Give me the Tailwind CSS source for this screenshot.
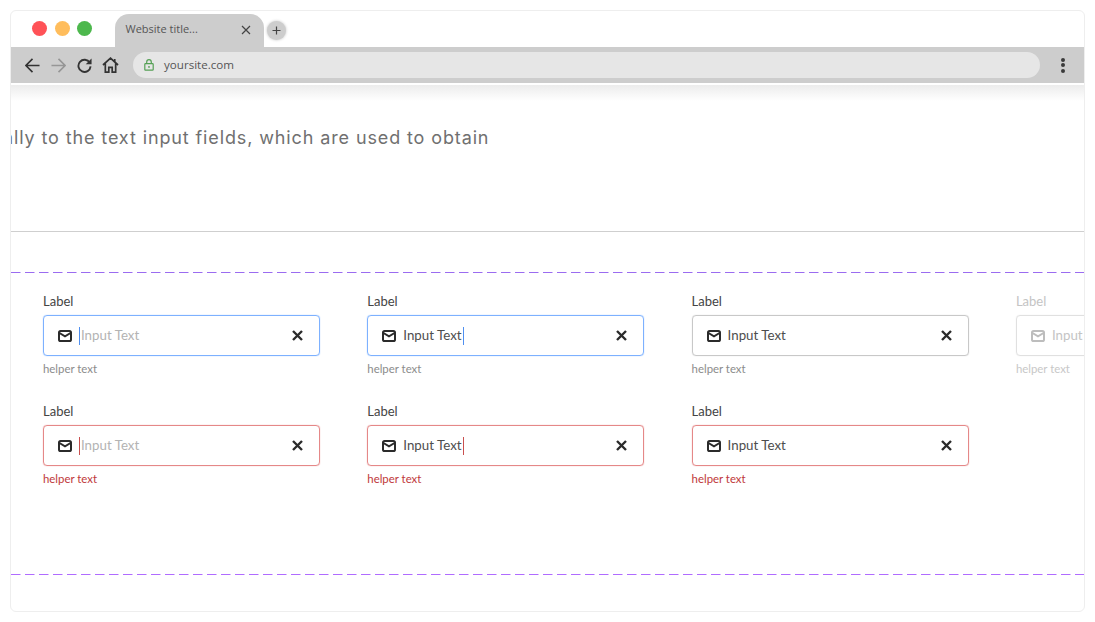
<!doctype html>
<html>
<head>
<meta charset="utf-8">
<script src="https://cdn.jsdelivr.net/npm/@tailwindcss/browser@4"></script>
</head>
<body class="bg-white w-[1095px] h-[622px] overflow-hidden font-['Lato',sans-serif]">
<div class="ml-[10px] mt-[10px] w-[1075px] h-[602px] rounded-[6px] border border-[#eeeeee] overflow-hidden bg-white flex flex-col">
  <!-- tab strip -->
  <div class="h-[36px] shrink-0 flex items-end">
    <div class="flex gap-[7.5px] ml-[21px] mb-[11px] mr-[22.5px]">
      <span class="w-[15px] h-[15px] rounded-full bg-[#ff5257]"></span>
      <span class="w-[15px] h-[15px] rounded-full bg-[#ffbd5c]"></span>
      <span class="w-[15px] h-[15px] rounded-full bg-[#4db84d]"></span>
    </div>
    <div class="w-[149px] h-[33px] rounded-t-[14px] bg-[#cdcdcd] flex items-center pl-[11px] pr-[13px] justify-between pb-[2px] font-['Open_Sans',sans-serif] text-[11px] text-[#555555]">
      <span>Website title...</span>
      <svg width="10" height="10" viewBox="0 0 10 10" fill="none" stroke="#444" stroke-width="1.2"><path d="M1 1l8 8M9 1l-8 8"/></svg>
    </div>
    <div class="ml-[3px] mb-[7px] w-[19px] h-[19px] rounded-full bg-[#cdcdcd] shadow-[0_0_3px_rgba(0,0,0,0.25)] flex items-center justify-center">
      <svg width="9" height="9" viewBox="0 0 9 9" fill="none" stroke="#444" stroke-width="1.2"><path d="M4.5 0.5v8M0.5 4.5h8"/></svg>
    </div>
  </div>
  <!-- toolbar -->
  <div class="h-[36px] shrink-0 bg-[#cdcdcd] flex items-center pl-[14px] pr-[19px]">
    <svg class="mr-[11px]" width="15" height="15" viewBox="0 0 16 16" fill="none" stroke="#333" stroke-width="1.7"><path d="M15.5 8H1M8 1L1 8l7 7"/></svg>
    <svg class="mr-[11px]" width="15" height="15" viewBox="0 0 16 16" fill="none" stroke="#969696" stroke-width="1.7"><path d="M0.5 8H15M8 1l7 7-7 7"/></svg>
    <svg class="mr-[10px]" width="15" height="15" viewBox="0 0 16 16" fill="none" stroke="#333" stroke-width="2"><path d="M13.6 5A6.5 6.5 0 1 0 14.5 9"/><path d="M15.5 0.5v6.2H9.3z" fill="#333" stroke="none"/></svg>
    <svg class="mr-[14px]" width="17" height="16" viewBox="0 0 18 17" fill="none" stroke="#333" stroke-width="1.8"><path d="M1 8.5L9 1.2l8 7.3M3.5 7v9h3.7v-5h3.6v5h3.7V7"/><path d="M13.5 2v3"/></svg>
    <div class="flex-1 h-[26px] rounded-full bg-[#e6e6e6] flex items-center pl-[11px] font-['Open_Sans',sans-serif] text-[11.6px] text-[#555555]">
      <svg class="mr-[10px]" width="10" height="12" viewBox="0 0 10 12" fill="none" stroke="#55a055" stroke-width="1.2"><rect x="0.8" y="4.6" width="8.4" height="6.6" rx="0.8"/><path d="M2.7 4.6V3a2.3 2.3 0 0 1 4.6 0v1.6"/><circle cx="5" cy="7.9" r="0.9" fill="#55a055" stroke="none"/></svg>
      <span>yoursite.com</span>
    </div>
    <div class="ml-[21px] flex flex-col gap-[1.5px]">
      <span class="w-[4px] h-[4px] rounded-full bg-[#3a3a3a]"></span>
      <span class="w-[4px] h-[4px] rounded-full bg-[#3a3a3a]"></span>
      <span class="w-[4px] h-[4px] rounded-full bg-[#3a3a3a]"></span>
    </div>
  </div>
  <div class="h-[2px] shrink-0 bg-white"></div>
  <div class="h-[16px] shrink-0 bg-gradient-to-b from-[#ececec] to-white"></div>
  <!-- text -->
  <div class="h-[131px] shrink-0 border-b border-[#cfcfcf] pt-[25px] overflow-hidden">
    <p class="whitespace-nowrap ml-[-8px] font-['Inter',sans-serif] text-[18px] leading-[24px] tracking-[0.88px] text-[#707070]">ally to the text input fields, which are used to obtain</p>
  </div>
  <div class="h-[42px] shrink-0 flex items-end">
    <svg class="block w-full h-[2px]" viewBox="0 0 1073 2" preserveAspectRatio="none"><line x1="0" y1="0.5" x2="1073" y2="0.5" stroke="#9b6cf0" stroke-width="1" stroke-dasharray="9.5 4.5"/></svg>
  </div>
  <!-- fields -->
  <div class="h-[300px] shrink-0 pl-[32px] pt-[19px] overflow-hidden">
    <div class="flex gap-[47.3px] h-[110px]">
      <div class="w-[277px] shrink-0">
        <div class="text-[13px] leading-[16px] text-[#444444]">Label</div>
        <div class="mt-[6px] h-[41px] rounded-[4px] border border-[#7db1ff] shadow-[0_0_1px_#7db1ff] flex items-center pl-[14px] pr-[16px]">
          <svg width="14" height="12" viewBox="0 0 14 12" fill="none" stroke="#2b2b2b" stroke-width="2"><rect x="1" y="1" width="12" height="10" rx="1.6"/><path d="M1.5 3l5.5 3.4L12.5 3"/></svg>
          <span class="ml-[7px] w-px h-[18px] bg-[#4f8ff0]"></span>
          <span class="ml-px text-[13.3px] text-[#b3b3b3]">Input Text</span>
          <svg class="ml-auto" width="11" height="11" viewBox="0 0 11 11" fill="none" stroke="#2b2b2b" stroke-width="2.4"><path d="M1 1l9 9M10 1l-9 9"/></svg>
        </div>
        <div class="mt-[6px] text-[11.4px] leading-[14px] text-[#8c8c8c]">helper text</div>
      </div>
      <div class="w-[277px] shrink-0">
        <div class="text-[13px] leading-[16px] text-[#444444]">Label</div>
        <div class="mt-[6px] h-[41px] rounded-[4px] border border-[#7db1ff] shadow-[0_0_1px_#7db1ff] flex items-center pl-[14px] pr-[16px]">
          <svg width="14" height="12" viewBox="0 0 14 12" fill="none" stroke="#2b2b2b" stroke-width="2"><rect x="1" y="1" width="12" height="10" rx="1.6"/><path d="M1.5 3l5.5 3.4L12.5 3"/></svg>
          <span class="ml-[7px] text-[13.3px] text-[#4d4d4d]">Input Text</span>
          <span class="ml-px w-px h-[18px] bg-[#4f8ff0]"></span>
          <svg class="ml-auto" width="11" height="11" viewBox="0 0 11 11" fill="none" stroke="#2b2b2b" stroke-width="2.4"><path d="M1 1l9 9M10 1l-9 9"/></svg>
        </div>
        <div class="mt-[6px] text-[11.4px] leading-[14px] text-[#8c8c8c]">helper text</div>
      </div>
      <div class="w-[277px] shrink-0">
        <div class="text-[13px] leading-[16px] text-[#444444]">Label</div>
        <div class="mt-[6px] h-[41px] rounded-[4px] border border-[#c8c8c8] shadow-[0_0_1px_#c8c8c8] flex items-center pl-[14px] pr-[16px]">
          <svg width="14" height="12" viewBox="0 0 14 12" fill="none" stroke="#2b2b2b" stroke-width="2"><rect x="1" y="1" width="12" height="10" rx="1.6"/><path d="M1.5 3l5.5 3.4L12.5 3"/></svg>
          <span class="ml-[7px] text-[13.3px] text-[#4d4d4d]">Input Text</span>
          <svg class="ml-auto" width="11" height="11" viewBox="0 0 11 11" fill="none" stroke="#2b2b2b" stroke-width="2.4"><path d="M1 1l9 9M10 1l-9 9"/></svg>
        </div>
        <div class="mt-[6px] text-[11.4px] leading-[14px] text-[#8c8c8c]">helper text</div>
      </div>
      <div class="w-[277px] shrink-0">
        <div class="text-[13px] leading-[16px] text-[#c4c4c4]">Label</div>
        <div class="mt-[6px] h-[41px] rounded-[4px] border border-[#e0e0e0] shadow-[0_0_1px_#e0e0e0] flex items-center pl-[14px] pr-[16px]">
          <svg width="14" height="12" viewBox="0 0 14 12" fill="none" stroke="#bdbdbd" stroke-width="2"><rect x="1" y="1" width="12" height="10" rx="1.6"/><path d="M1.5 3l5.5 3.4L12.5 3"/></svg>
          <span class="ml-[7px] text-[13.3px] text-[#c4c4c4]">Input Text</span>
        </div>
        <div class="mt-[6px] text-[11.4px] leading-[14px] text-[#c8c8c8]">helper text</div>
      </div>
    </div>
    <div class="flex gap-[47.3px]">
      <div class="w-[277px] shrink-0">
        <div class="text-[13px] leading-[16px] text-[#444444]">Label</div>
        <div class="mt-[6px] h-[41px] rounded-[4px] border border-[#e58888] shadow-[0_0_1px_#e58888] flex items-center pl-[14px] pr-[16px]">
          <svg width="14" height="12" viewBox="0 0 14 12" fill="none" stroke="#2b2b2b" stroke-width="2"><rect x="1" y="1" width="12" height="10" rx="1.6"/><path d="M1.5 3l5.5 3.4L12.5 3"/></svg>
          <span class="ml-[7px] w-px h-[18px] bg-[#c94f4f]"></span>
          <span class="ml-px text-[13.3px] text-[#b3b3b3]">Input Text</span>
          <svg class="ml-auto" width="11" height="11" viewBox="0 0 11 11" fill="none" stroke="#2b2b2b" stroke-width="2.4"><path d="M1 1l9 9M10 1l-9 9"/></svg>
        </div>
        <div class="mt-[6px] text-[11.4px] leading-[14px] text-[#c0393b]">helper text</div>
      </div>
      <div class="w-[277px] shrink-0">
        <div class="text-[13px] leading-[16px] text-[#444444]">Label</div>
        <div class="mt-[6px] h-[41px] rounded-[4px] border border-[#e58888] shadow-[0_0_1px_#e58888] flex items-center pl-[14px] pr-[16px]">
          <svg width="14" height="12" viewBox="0 0 14 12" fill="none" stroke="#2b2b2b" stroke-width="2"><rect x="1" y="1" width="12" height="10" rx="1.6"/><path d="M1.5 3l5.5 3.4L12.5 3"/></svg>
          <span class="ml-[7px] text-[13.3px] text-[#4d4d4d]">Input Text</span>
          <span class="ml-px w-px h-[18px] bg-[#c94f4f]"></span>
          <svg class="ml-auto" width="11" height="11" viewBox="0 0 11 11" fill="none" stroke="#2b2b2b" stroke-width="2.4"><path d="M1 1l9 9M10 1l-9 9"/></svg>
        </div>
        <div class="mt-[6px] text-[11.4px] leading-[14px] text-[#c0393b]">helper text</div>
      </div>
      <div class="w-[277px] shrink-0">
        <div class="text-[13px] leading-[16px] text-[#444444]">Label</div>
        <div class="mt-[6px] h-[41px] rounded-[4px] border border-[#e58888] shadow-[0_0_1px_#e58888] flex items-center pl-[14px] pr-[16px]">
          <svg width="14" height="12" viewBox="0 0 14 12" fill="none" stroke="#2b2b2b" stroke-width="2"><rect x="1" y="1" width="12" height="10" rx="1.6"/><path d="M1.5 3l5.5 3.4L12.5 3"/></svg>
          <span class="ml-[7px] text-[13.3px] text-[#4d4d4d]">Input Text</span>
          <svg class="ml-auto" width="11" height="11" viewBox="0 0 11 11" fill="none" stroke="#2b2b2b" stroke-width="2.4"><path d="M1 1l9 9M10 1l-9 9"/></svg>
        </div>
        <div class="mt-[6px] text-[11.4px] leading-[14px] text-[#c0393b]">helper text</div>
      </div>
    </div>
  </div>
  <svg class="block w-full h-[2px] shrink-0" viewBox="0 0 1073 2" preserveAspectRatio="none"><line x1="0" y1="0.5" x2="1073" y2="0.5" stroke="#b06cff" stroke-width="1" stroke-dasharray="9.5 4.5"/></svg>
</div>
</body>
</html>
